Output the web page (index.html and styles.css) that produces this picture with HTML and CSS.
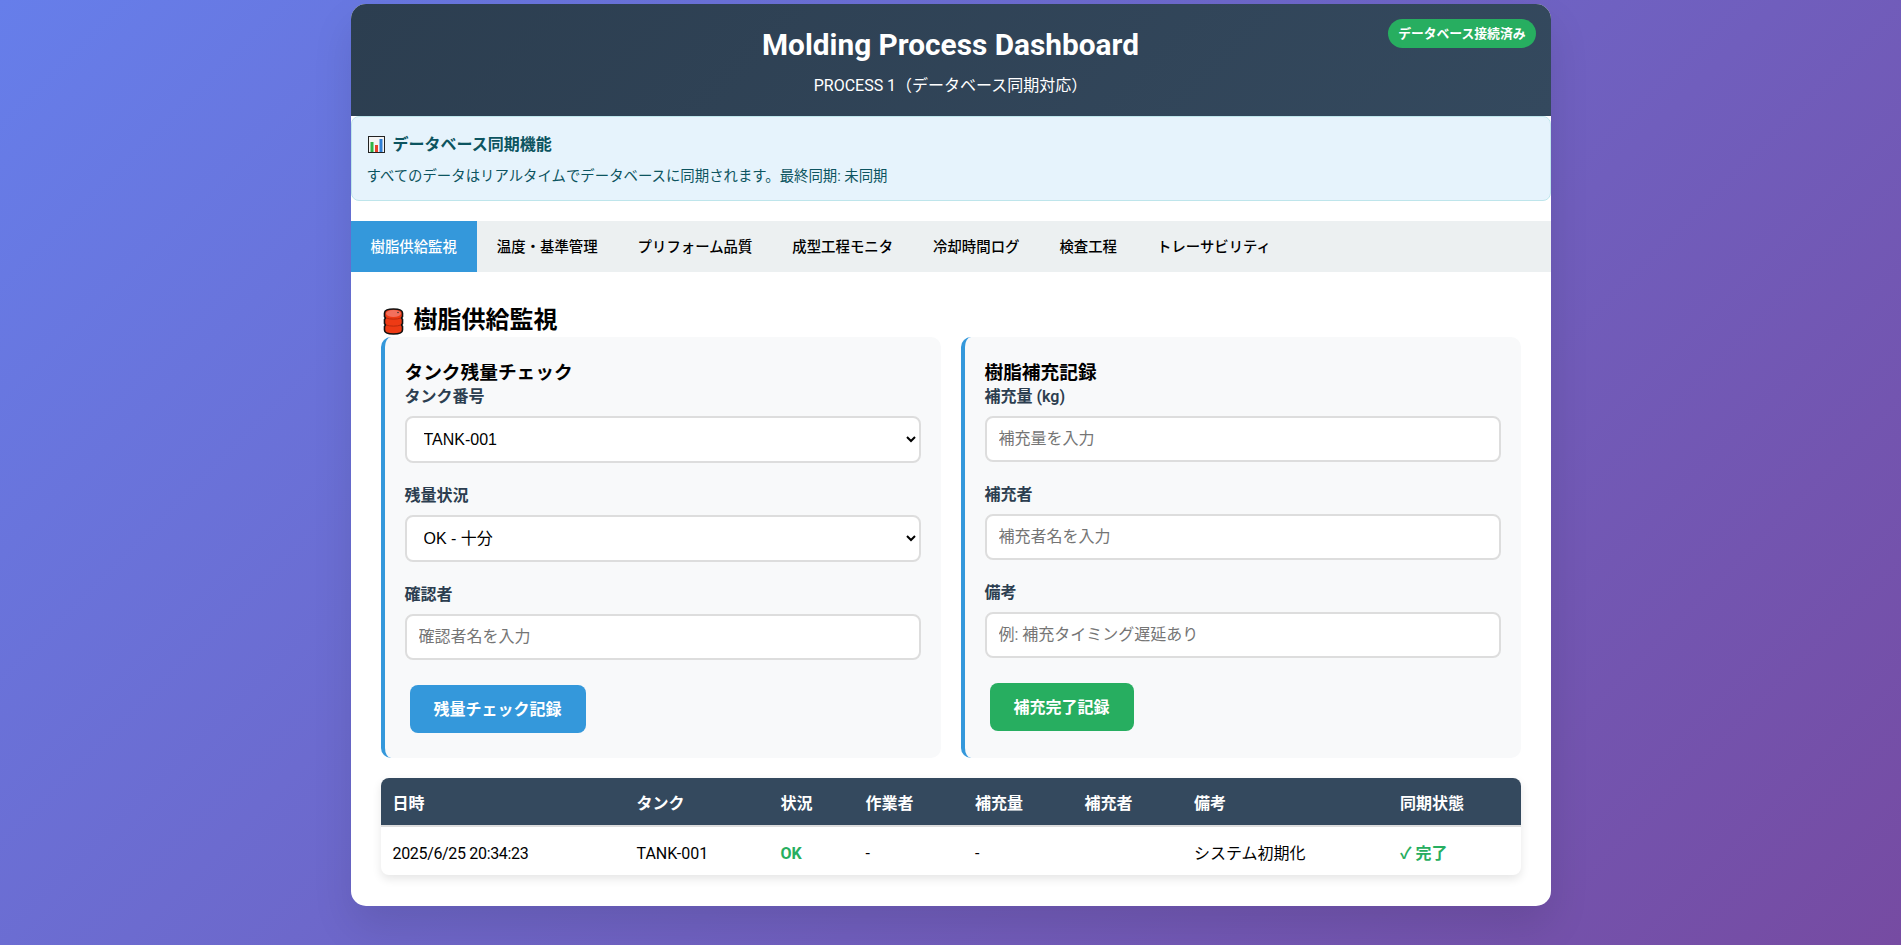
FILE: index.html
```html
<!DOCTYPE html>
<html lang="ja">
<head>
    <meta charset="UTF-8">
    <meta name="viewport" content="width=device-width, initial-scale=1.0">
    <title>Molding Process Dashboard</title>
    <link rel="stylesheet" href="styles.css">
</head>
<body>
    <div class="container">
        <header class="header">
            <div class="status">データベース接続済み</div>
            <h1>Molding Process Dashboard</h1>
            <p>PROCESS 1（データベース同期対応）</p>
        </header>

        <div class="sync-info">
            <h4>
                <svg class="chart-icon" width="17" height="17" viewBox="0 0 17 17">
                    <rect x="0.5" y="0.5" width="16" height="16" fill="#f4f4f4" stroke="#222"/>
                    <rect x="2.5" y="6" width="3" height="10" fill="#2fb344"/>
                    <rect x="7" y="9" width="3" height="7" fill="#e8402a"/>
                    <rect x="11.500" y="3" width="3" height="13" fill="#2f7fd6"/>
                </svg>
                データベース同期機能
            </h4>
            <p>すべてのデータはリアルタイムでデータベースに同期されます。最終同期: 未同期</p>
        </div>

        <nav class="tabs">
            <button class="tab active">樹脂供給監視</button>
            <button class="tab">温度・基準管理</button>
            <button class="tab">プリフォーム品質</button>
            <button class="tab">成型工程モニタ</button>
            <button class="tab">冷却時間ログ</button>
            <button class="tab">検査工程</button>
            <button class="tab">トレーサビリティ</button>
        </nav>

        <main class="content">
            <h2>
                <svg class="barrel-icon" width="21" height="27" viewBox="0 0 21 27">
                    <path d="M1.500 5 C1.500 2 5 1 10.500 1 C16 1 19.500 2 19.500 5 V8.500 L18.500 10 L19.500 11.500 V15.500 L18.500 17 L19.500 18.500 V22 C19.500 25 16 26 10.500 26 C5 26 1.500 25 1.500 22 V18.500 L2.500 17 L1.500 15.500 V11.500 L2.500 10 L1.500 8.500 Z" fill="#ee3a14" stroke="#111" stroke-width="1.6"/>
                    <ellipse cx="10.500" cy="5.500" rx="7.500" ry="3.500" fill="#f2705c"/>
                    <path d="M3 10 C7 11.500 14 11.500 18 10 M3 17 C7 18.500 14 18.500 18 17" fill="none" stroke="#b92a0c" stroke-width="1"/>
                    <circle cx="15" cy="4.500" r="0.8" fill="#333"/>
                </svg>
                樹脂供給監視
            </h2>

            <div class="form-grid">
                <section class="card">
                    <h3>タンク残量チェック</h3>
                    <div class="form-group">
                        <label>タンク番号</label>
                        <select>
                            <option>TANK-001</option>
                            <option>TANK-002</option>
                        </select>
                    </div>
                    <div class="form-group">
                        <label>残量状況</label>
                        <select>
                            <option>OK - 十分</option>
                            <option>NG - 不足</option>
                        </select>
                    </div>
                    <div class="form-group">
                        <label>確認者</label>
                        <input type="text" placeholder="確認者名を入力">
                    </div>
                    <button class="btn btn-blue">残量チェック記録</button>
                </section>

                <section class="card">
                    <h3>樹脂補充記録</h3>
                    <div class="form-group">
                        <label>補充量 (kg)</label>
                        <input type="text" placeholder="補充量を入力">
                    </div>
                    <div class="form-group">
                        <label>補充者</label>
                        <input type="text" placeholder="補充者名を入力">
                    </div>
                    <div class="form-group">
                        <label>備考</label>
                        <input type="text" placeholder="例: 補充タイミング遅延あり">
                    </div>
                    <button class="btn btn-green">補充完了記録</button>
                </section>
            </div>

            <div class="table-wrap">
                <table>
                    <thead>
                        <tr>
                            <th class="col-date">日時</th>
                            <th class="col-tank">タンク</th>
                            <th class="col-status">状況</th>
                            <th class="col-short">作業者</th>
                            <th class="col-short">補充量</th>
                            <th class="col-short">補充者</th>
                            <th class="col-note">備考</th>
                            <th>同期状態</th>
                        </tr>
                    </thead>
                    <tbody>
                        <tr>
                            <td class="log-time">2025/6/25 20:34:23</td>
                            <td>TANK-001</td>
                            <td class="ok">OK</td>
                            <td>-</td>
                            <td>-</td>
                            <td></td>
                            <td>システム初期化</td>
                            <td class="ok">✓ 完了</td>
                        </tr>
                    </tbody>
                </table>
            </div>
        </main>
    </div>
</body>
</html>
```

FILE: styles.css
```css
* {
    margin: 0;
    padding: 0;
    box-sizing: border-box;
}

body {
    min-height: 100vh;
    padding-top: 4px;
    font-family: Roboto, 'Noto Sans CJK JP', sans-serif;
    background: linear-gradient(135deg, #667eea 0%, #764ba2 100%);
    color: #000;
}

.container {
    width: 1200px;
    margin: 0 auto;
    background-color: white;
    border-radius: 15px;
    overflow: hidden;
    box-shadow: 0 20px 40px rgba(0, 0, 0, 0.1);
}

.header {
    position: relative;
    padding: 21px 20px 19px;
    text-align: center;
    color: white;
    background: linear-gradient(135deg, #2c3e50, #34495e);
}

.header h1 {
    font-size: 29.8px;
    line-height: 40px;
    margin-bottom: 10px;
}

.header p {
    font-size: 16px;
    line-height: 22px;
}

.status {
    position: absolute;
    top: 15px;
    right: 15px;
    padding: 5px 10px;
    font-size: 12.8px;
    line-height: 19px;
    font-weight: bold;
    background-color: #27ae60;
    border-radius: 20px;
}

.sync-info {
    padding: 15px 15px 13px;
    margin-bottom: 20px;
    color: #0c5460;
    background-color: #e6f3fc;
    border: 1px solid #bee5eb;
    border-radius: 8px;
}

.sync-info h4 {
    display: flex;
    align-items: center;
    gap: 8px;
    font-size: 16px;
    line-height: 25px;
    margin-bottom: 10px;
}

.chart-icon {
    margin-left: 1px;
}

.sync-info p {
    font-size: 14.4px;
    line-height: 20px;
}

.tabs {
    display: flex;
    background-color: #ecf0f1;
}

.tab {
    padding: 16px 20px 14px;
    font-family: inherit;
    font-size: 14.4px;
    line-height: 21px;
    font-weight: 500;
    color: #000;
    background: none;
    border: none;
    cursor: pointer;
}

.tab.active {
    color: white;
    background-color: #3498db;
}

.content {
    padding: 30px 30px 31px;
}

.content h2 {
    display: flex;
    align-items: center;
    gap: 10px;
    padding-top: 2px;
    font-size: 24px;
    line-height: 33px;
}

.barrel-icon {
    margin-left: 2px;
    margin-top: 2px;
}

.form-grid {
    display: grid;
    grid-template-columns: 1fr 1fr;
    gap: 20px;
    margin-bottom: 20px;
}

.card {
    padding: 26px 20px 20px;
    background-color: #f8f9fa;
    border-left: 4px solid #3498db;
    border-radius: 10px;
}

.card h3 {
    font-size: 18.7px;
    line-height: 21px;
}

.form-group {
    margin-bottom: 20px;
}

.form-group label {
    display: block;
    padding-top: 1px;
    font-size: 16px;
    line-height: 24px;
    font-weight: 600;
    color: #2c3e50;
    margin-bottom: 7px;
}

.form-group input,
.form-group select {
    display: block;
    width: 100%;
    height: 46px;
    padding: 11px 12px 13px;
    font-size: 16px;
    font-family: inherit;
    background-color: white;
    border: 2px solid #ddd;
    border-radius: 8px;
}

.form-group select {
    height: 47px;
    padding: 12px 13px;
    font-family: 'Liberation Sans', 'Noto Sans CJK JP', sans-serif;
}

.form-group input::placeholder {
    color: #757575;
}

.btn {
    margin: 5px;
    padding: 13px 24px 12px;
    font-family: inherit;
    font-size: 16px;
    line-height: 23px;
    font-weight: 600;
    color: white;
    border: none;
    border-radius: 8px;
    cursor: pointer;
}

.btn-blue {
    background-color: #3498db;
}

.btn-green {
    background-color: #27ae60;
}

.table-wrap {
    border-radius: 8px;
    overflow: hidden;
    box-shadow: 0 4px 10px rgba(0, 0, 0, 0.1);
}

table {
    width: 100%;
    table-layout: fixed;
    border-collapse: collapse;
    font-size: 16px;
}

th {
    padding: 14px 12px 10px;
    height: 48px;
    line-height: 22px;
    text-align: left;
    font-weight: 600;
    color: white;
    background-color: #34495e;
    border-bottom: 2px solid #ddd;
}

td {
    padding: 15px 12px 10px;
    height: 49px;
    line-height: 22px;
}

.log-time {
    letter-spacing: -0.33px;
}

.col-date { width: 244px; }
.col-tank { width: 144px; }
.col-status { width: 85px; }
.col-short { width: 109.500px; }
.col-note { width: 206px; }

.ok {
    font-weight: bold;
    color: #27ae60;
}
```
